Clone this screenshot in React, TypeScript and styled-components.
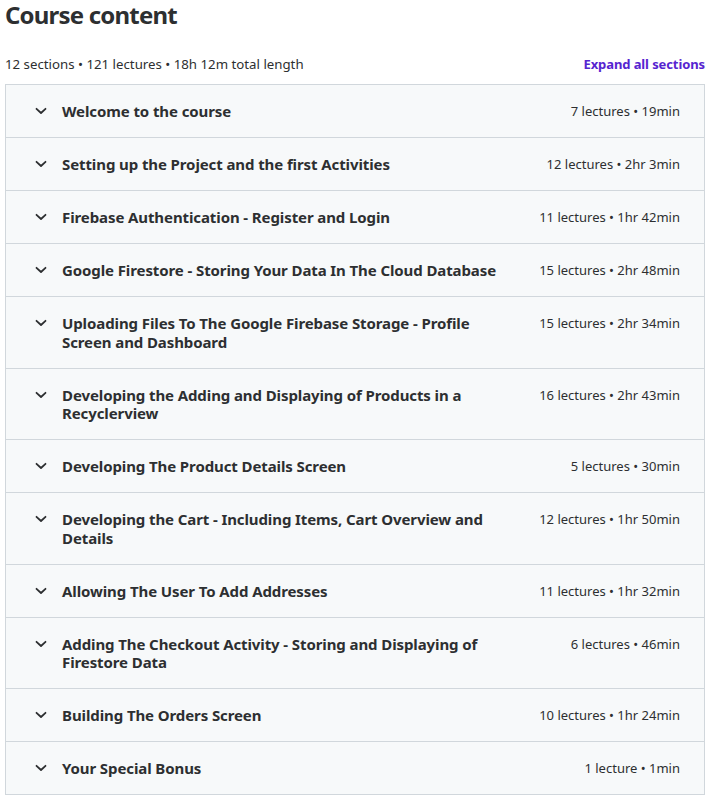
import React from "react";
import styled, { createGlobalStyle } from "styled-components";

const Global = createGlobalStyle`
  html, body { margin: 0; padding: 0; background: #fff; }
  body { font-family: "Noto Sans", "Open Sans", sans-serif; color: #2d2f31; }
`;

const Page = styled.div`
  padding: 0 5px;
`;

const Heading = styled.h2`
  margin: 0;
  font-size: 24px;
  line-height: 30px;
  font-weight: 700;
  color: #2d2f31;
  letter-spacing: -0.8px;
`;

const SummaryBar = styled.div`
  display: flex;
  justify-content: space-between;
  align-items: center;
  margin-top: 22px;
  height: 24px;
  margin-bottom: 8px;
`;

const SummaryText = styled.span`
  font-size: 13.25px;
  color: #2d2f31;
`;

const ExpandButton = styled.button`
  border: 0;
  background: none;
  padding: 0;
  font-family: inherit;
  font-size: 13px;
  font-weight: 700;
  color: #5624d0;
  letter-spacing: -0.1px;
  cursor: pointer;
`;

const List = styled.div`
  border: 1px solid #d1d7dc;
  border-bottom: 0;
`;

const Row = styled.div`
  display: flex;
  align-items: flex-start;
  background: #f7f9fa;
  border-bottom: 1px solid #d1d7dc;
  padding: 17px 24px 16.5px 28px;
`;

const Chevron = styled.span`
  flex: none;
  width: 14px;
  height: 18.5px;
  display: flex;
  align-items: center;
  justify-content: center;
  margin-right: 14px;
  color: #2d2f31;
`;

const Title = styled.span`
  flex: 1;
  font-size: 15px;
  line-height: 18.5px;
  font-weight: 700;
  letter-spacing: -0.1px;
  color: #2d2f31;
`;

const Meta = styled.span`
  flex: none;
  margin-left: 32px;
  font-size: 13px;
  line-height: 18.5px;
  color: #2d2f31;
`;

const sections: [string, string][] = [
  ["Welcome to the course", "7 lectures • 19min"],
  ["Setting up the Project and the first Activities", "12 lectures • 2hr 3min"],
  ["Firebase Authentication - Register and Login", "11 lectures • 1hr 42min"],
  ["Google Firestore - Storing Your Data In The Cloud Database", "15 lectures • 2hr 48min"],
  ["Uploading Files To The Google Firebase Storage - Profile Screen and Dashboard", "15 lectures • 2hr 34min"],
  ["Developing the Adding and Displaying of Products in a Recyclerview", "16 lectures • 2hr 43min"],
  ["Developing The Product Details Screen", "5 lectures • 30min"],
  ["Developing the Cart - Including Items, Cart Overview and Details", "12 lectures • 1hr 50min"],
  ["Allowing The User To Add Addresses", "11 lectures • 1hr 32min"],
  ["Adding The Checkout Activity - Storing and Displaying of Firestore Data", "6 lectures • 46min"],
  ["Building The Orders Screen", "10 lectures • 1hr 24min"],
  ["Your Special Bonus", "1 lecture • 1min"],
];

const ChevronIcon = () => (
  <svg width="12" height="8" viewBox="0 0 12 8" fill="none">
    <path d="M1.5 1.8 L6 6 L10.5 1.8" stroke="currentColor" strokeWidth="1.8" strokeLinecap="round" strokeLinejoin="round" />
  </svg>
);

export default function App() {
  return (
    <Page>
      <Global />
      <Heading>Course content</Heading>
      <SummaryBar>
        <SummaryText>12 sections • 121 lectures • 18h 12m total length</SummaryText>
        <ExpandButton>Expand all sections</ExpandButton>
      </SummaryBar>
      <List>
        {sections.map(([t, m]) => (
          <Row key={t}>
            <Chevron>
              <ChevronIcon />
            </Chevron>
            <Title>{t}</Title>
            <Meta>{m}</Meta>
          </Row>
        ))}
      </List>
    </Page>
  );
}
